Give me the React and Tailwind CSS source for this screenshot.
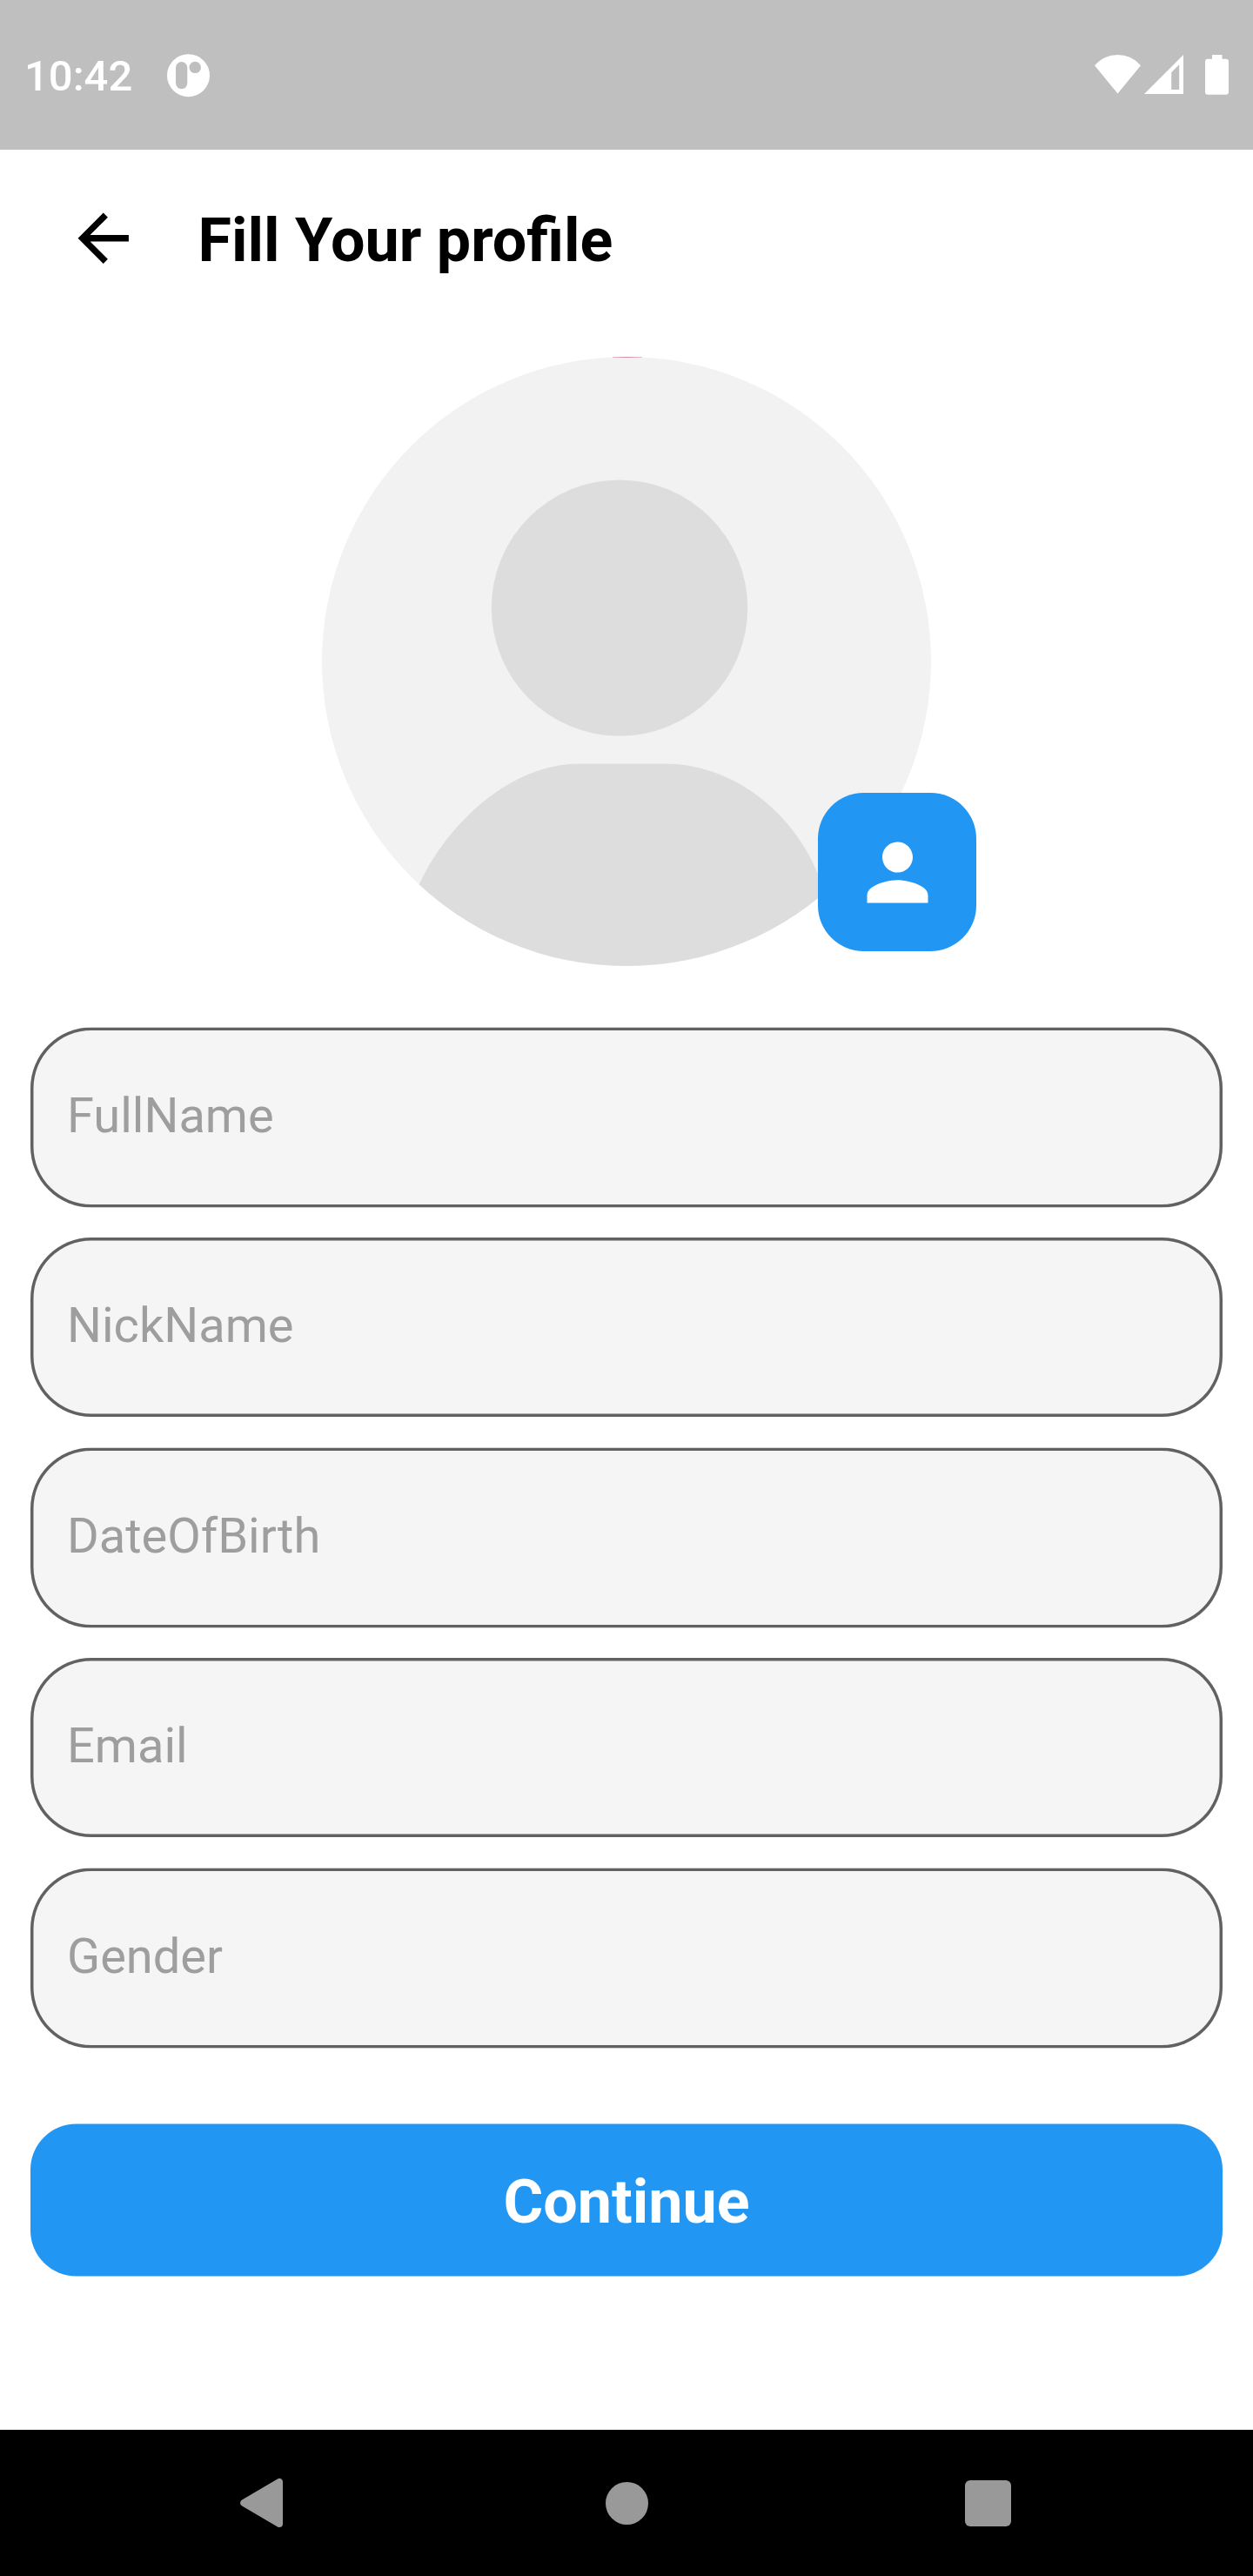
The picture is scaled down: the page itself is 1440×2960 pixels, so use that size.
import React from "react";

const fields = ["FullName", "NickName", "DateOfBirth", "Email", "Gender"];

function StatusBar() {
  return (
    <div className="flex h-[172px] items-start justify-between bg-[#bfbfbf] pl-[28px] pr-[28px] pt-[59px] text-white">
      <div className="flex items-start">
        <span className="w-[164px] text-[49px] font-medium leading-[57px]">10:42</span>
        <svg className="mt-[3px] h-[50px] w-[50px]" viewBox="0 0 50 50">
          <circle cx="24.5" cy="24.7" r="24.5" fill="#fff" />
          <rect x="10" y="9" width="13.3" height="31.2" rx="6.65" fill="#bfbfbf" />
          <circle cx="32.2" cy="15.4" r="6.7" fill="#bfbfbf" />
        </svg>
      </div>
      <div className="flex items-start">
        <svg className="mt-[3px] h-[48px] w-[154px]" viewBox="1258 62 154 48" fill="#fff">
          <path d="M1258 75.3 Q1268.5 63 1284.5 63 Q1300.5 63 1311 75.3 L1284.5 107.5 Z" />
          <path fillRule="evenodd" d="M1315 108 L1360 63 V108 Z M1346.2 83.3 V103 H1355.2 V74.3 Z" />
          <path d="M1393 67.7 V63 H1404.5 V67.7 H1409 Q1412 67.7 1412 70.7 V105.7 Q1412 108.7 1409 108.7 H1388 Q1385 108.7 1385 105.7 V70.7 Q1385 67.7 1388 67.7 Z" />
        </svg>
      </div>
    </div>
  );
}

function Header() {
  return (
    <header className="flex h-[204px] items-center pl-[75px]">
      <svg className="h-[87.5px] w-[87.5px]" viewBox="0 0 24 24">
        <path d="M20 11H7.83l5.59-5.59L12 4l-8 8 8 8 1.41-1.41L7.83 13H20v-2z" />
      </svg>
      <h1 className="ml-[65px] pt-[4px] text-[70px] font-bold leading-[82px] text-black">Fill Your profile</h1>
    </header>
  );
}

function Avatar() {
  return (
    <div className="relative mx-auto mt-[34px] h-[700px] w-[700px]">
      <svg className="h-full w-full" viewBox="370 410 700 700">
        <defs>
          <clipPath id="avatar">
            <circle cx="720" cy="760" r="350" />
          </clipPath>
        </defs>
        <g clipPath="url(#avatar)">
          <rect x="370" y="410" width="700" height="700" fill="#f2f2f2" />
          <rect x="704" y="410" width="34" height="0.6" fill="#b8486a" />
          <circle cx="712" cy="698.6" r="147.2" fill="#dddddd" />
          <path
            d="M476 1030 C500 965 575 877.5 667 877.5 H762 C862 877.5 932 960 948 1030 V1110 H476 Z"
            fill="#dddddd"
          />
        </g>
      </svg>
      <button className="absolute left-[570px] top-[501px] flex h-[182px] w-[182px] items-center justify-center rounded-[52.5px] bg-[#2196f3]">
        <svg className="h-[105px] w-[105px]" viewBox="0 0 24 24" fill="#fff">
          <path d="M12 12c2.21 0 4-1.79 4-4s-1.79-4-4-4-4 1.79-4 4 1.79 4 4 4zm0 2c-2.67 0-8 1.34-8 4v2h16v-2c0-2.66-5.33-4-8-4z" />
        </svg>
      </button>
    </div>
  );
}

function NavBar() {
  return (
    <nav className="mt-auto flex h-[168px] items-center justify-between bg-black pl-[275px] pr-[278px]">
      <svg className="h-[58px] w-[56px]" viewBox="0 0 56 58" fill="#999" stroke="#999" strokeWidth="8" strokeLinejoin="round">
        <path d="M5.2 29 L46 4.9 V53.1 Z" />
      </svg>
      <div className="h-[49px] w-[49px] rounded-full bg-[#999]" />
      <div className="h-[53px] w-[53px] rounded-[6px] bg-[#999]" />
    </nav>
  );
}

export default function App() {
  return (
    <div className="flex h-[2960px] w-[1440px] flex-col overflow-hidden bg-white font-['Roboto',sans-serif]">
      <StatusBar />
      <Header />
      <Avatar />
      <form className="mt-[70px] flex flex-col gap-[35px] px-[35px]">
        {fields.map((name, i) => (
          <div
            key={name}
            className={
              "flex h-[206.5px] items-center rounded-[70px] bg-[#f5f5f5] pl-[42px] shadow-[inset_0_0_0_3.5px_#616161] " +
              (i % 2 === 0 ? "translate-y-[0.5px] pb-[5px]" : "pb-[3px]")
            }
          >
            <span className="text-[56px] leading-[66px] text-[#9e9e9e]">{name}</span>
          </div>
        ))}
      </form>
      <button className="mx-[35px] mt-[87px] flex h-[175px] translate-y-[0.5px] items-center justify-center rounded-[52.5px] bg-[#2196f3] pt-[3px] text-[70px] font-bold leading-[82px] text-white">
        Continue
      </button>
      <NavBar />
    </div>
  );
}
